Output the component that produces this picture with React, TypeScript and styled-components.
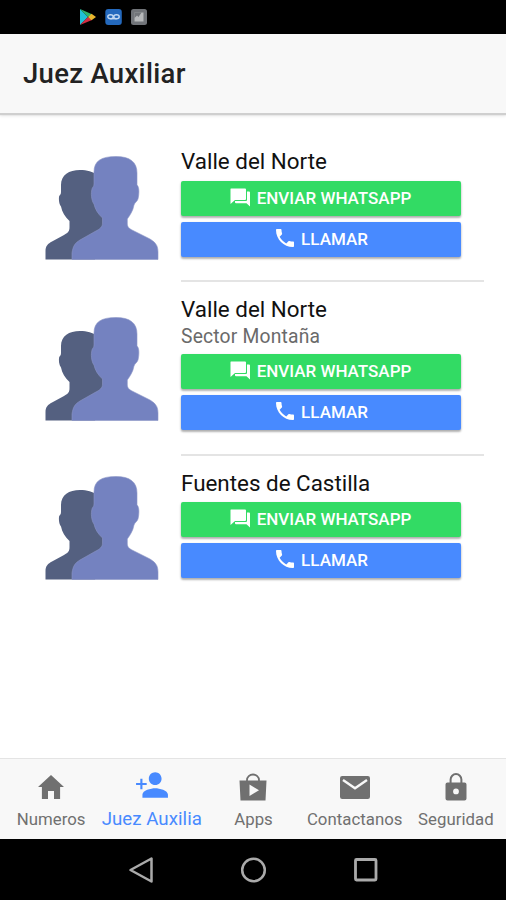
import React from "react";
import styled, { createGlobalStyle } from "styled-components";
import { IoMdCall, IoMdHome, IoMdPersonAdd } from "react-icons/io";

const GlobalStyle = createGlobalStyle`
  * { box-sizing: border-box; }
  body { margin: 0; background: #fff; font-family: Roboto, sans-serif; }
`;

const Screen = styled.div`
  width: 506px;
  height: 900px;
  display: flex;
  flex-direction: column;
  background: #fff;
  overflow: hidden;
`;

const StatusBar = styled.div`
  height: 34px;
  flex: none;
  background: #000;
  display: flex;
  align-items: center;
  gap: 8px;
  padding-left: 79px;
  svg { display: block; }
`;

const Header = styled.header`
  height: 79px;
  flex: none;
  background: #f8f8f8;
  display: flex;
  align-items: center;
  padding: 0 24px 0 23px;
  box-shadow: 0 2px 1px #cfcfcf, 0 3px 3px rgba(0, 0, 0, 0.1);
`;

const Title = styled.h1`
  margin: 0;
  font-size: 27.5px;
  font-weight: 500;
  line-height: 34px;
  letter-spacing: 0.3px;
  color: #222;
`;

const List = styled.main`
  flex: 1;
  padding-top: 21px;
`;

const Row = styled.section`
  display: flex;
  align-items: center;
  padding-left: 45px;
`;

const AvatarBox = styled.div<{ $last?: boolean }>`
  width: 136px;
  flex: none;
  margin-bottom: ${(p) => (p.$last ? 2 : 0)}px;
  svg { display: block; }
`;

const Details = styled.div<{ $last?: boolean }>`
  width: 303px;
  padding: 14px 23px 23.2px 0;
  border-bottom: 2px solid ${(p) => (p.$last ? "transparent" : "#e4e4e4")};
`;

const Name = styled.h2`
  margin: 0;
  font-size: 22.4px;
  font-weight: 400;
  line-height: 26px;
  height: 32.6px;
  color: #111;
  white-space: nowrap;
`;

const Sector = styled.p`
  margin: -4px 0 4px;
  font-size: 19.3px;
  line-height: 26px;
  letter-spacing: 0.18px;
  color: #6a6a6a;
`;

const Action = styled.button<{ $color: string; $gap: number }>`
  width: 280px;
  height: 35px;
  margin: 0 0 6px;
  padding: 0 1px 1px 0;
  border: 0;
  border-radius: 2px;
  background: ${(p) => p.$color};
  color: #fff;
  display: flex;
  align-items: center;
  justify-content: center;
  gap: ${(p) => p.$gap}px;
  font: 500 17px/20px Roboto, sans-serif;
  box-shadow: 0 2px 2px rgba(0, 0, 0, 0.24), 0 1px 3px rgba(0, 0, 0, 0.14);
  svg { display: block; flex: none; margin-bottom: 2px; }
  &:last-child { margin-bottom: 0; }
`;

const Tabs = styled.nav`
  height: 80px;
  flex: none;
  display: grid;
  grid-template-columns: repeat(5, 1fr);
  margin-bottom: 1px;
  background: #f8f8f8;
  border-top: 1px solid #e4e4e4;
  box-shadow: 0 1px 0 #f8f8f8;
`;

const Tab = styled.a<{ $active?: boolean }>`
  display: flex;
  flex-direction: column;
  align-items: center;
  padding: ${(p) => (p.$active ? 9 : 12)}px 0 0 ${(p) => (p.$active ? 0 : 1)}px;
  color: ${(p) => (p.$active ? "#488aff" : "#707070")};
  svg { display: block; flex: none; }
`;

const TabLabel = styled.span<{ $active?: boolean }>`
  margin-top: ${(p) => (p.$active ? 6 : 5)}px;
  font-size: ${(p) => (p.$active ? 18.7 : 16.8)}px;
  line-height: 22px;
  letter-spacing: 0.03px;
  white-space: nowrap;
`;

const SystemBar = styled.div`
  height: 61px;
  flex: none;
  background: #000;
  display: flex;
  justify-content: center;
  align-items: center;
  gap: 84px;
  padding-left: 1px;
  svg { display: block; }
`;

const People = () => (
  <svg width="114" height="104" viewBox="0 0 114 104">
    <path
      fill="#546080"
      d="M.5 103.500V95C.5 90 3 87.500 7 85.500L19 79C23.500 76.500 24.500 75 24.500 71V65C20 61 17 56 16 50.500C14 48 13.500 43 14.200 40C15 39 16 38.500 16 36V29C16 19 24 14 35 14C42 14 48 15.500 52 19L62 64L50 103.500Z"
    />
    <path
      fill="#7482c0"
      stroke="#8b96c6"
      strokeWidth=".6"
      d="M27 103.500V97C28 90 30 87 35 84L50 75.500C55 73 57.500 71 57.500 67V62C53 58 50 53 49 48C46.500 45 45.500 37 47.300 32C48 31 49 30 49 28V16C49 5 56 .5 71 .5C85 .5 92 6 92 17V29C94.500 31 94.200 38 93 43C92 46 90 46 89 49C88 55 85 59 82.300 63V68C82.500 71 84 72.500 88 74.500L103 82C110 85.500 113 89 113 96V103.500Z"
    />
  </svg>
);

const PlayStore = () => (
  <svg width="18" height="18" viewBox="0 0 18 18">
    <path fill="#20bfd5" d="M1 1v16l8-8z" />
    <path fill="#31b36b" d="M1 1l12 5.300L9 9z" />
    <path fill="#d62d43" d="M1 17l8-8 4 3z" />
    <path fill="#e9b62d" d="M12.500 5.800L17 9l-4.500 3.200L9 9z" />
  </svg>
);

const Voicemail = () => (
  <svg width="18" height="18" viewBox="0 0 18 18">
    <rect x=".3" y="1" width="16.500" height="16" rx="3" fill="#2469bd" />
    <g fill="none" stroke="#c3d9f2" strokeWidth="1.400">
      <ellipse cx="5.500" cy="8.700" rx="2.700" ry="2" />
      <ellipse cx="11.500" cy="8.700" rx="2.700" ry="2" />
      <path d="M5.500 10.700h6" />
    </g>
  </svg>
);

const Picture = () => (
  <svg width="17" height="18" viewBox="0 0 17 18">
    <rect x="0" y="1" width="16" height="16" rx="2.500" fill="#717479" />
    <path fill="#b7b9bb" d="M3.500 4.500H12.500v9h-9z" />
    <path fill="#717479" d="M3.500 4.500h7l-3 4.500-1.500-1.500-2.500 2.500z" />
  </svg>
);

const Chat = () => (
  <svg width="20" height="20" viewBox="0 0 20 20">
    <path fill="currentColor" d="M1 1.500H15a1 1 0 0 1 1 1V12a1 1 0 0 1-1 1H5L.5 17V2a.5 .5 0 0 1 .5-.5z" />
    <path fill="currentColor" d="M17 4.500H19a1 1 0 0 1 1 1v14l-3.500-3.300H6a1 1 0 0 1-1-1V14H16a1 1 0 0 0 1-1z" />
  </svg>
);

const PlayBag = () => (
  <svg width="32" height="32" viewBox="0 0 32 32">
    <path fill="currentColor" fillRule="evenodd" d="M2.500 9.500h27l-1 20H3.500zM12.500 13.500v11.500l9.500-5.700z" />
    <path fill="none" stroke="currentColor" strokeWidth="1.800" d="M10 10V9a6 5.500 0 0 1 12 0V10" />
  </svg>
);

const Mail = () => (
  <svg width="32" height="32" viewBox="0 0 32 32">
    <rect x="1" y="5" width="30" height="23" rx="2.200" fill="currentColor" />
    <path fill="none" stroke="#f8f8f8" strokeWidth="2.400" d="M4 9L16 17.300 28 9" />
  </svg>
);

const Lock = () => (
  <svg width="32" height="32" viewBox="0 0 32 32">
    <path
      fill="currentColor"
      fillRule="evenodd"
      d="M7.500 11.500h17a2 2 0 0 1 2 2V27.500a2 2 0 0 1-2 2h-17a2 2 0 0 1-2-2V13.500a2 2 0 0 1 2-2zM16 17.500a2.900 2.900 0 1 0 0 5.800a2.900 2.900 0 0 0 0-5.800z"
    />
    <path fill="none" stroke="currentColor" strokeWidth="2" d="M10.600 12V8.500a5.400 5.400 0 0 1 10.800 0V12" />
  </svg>
);

const contacts = [
  { name: "Valle del Norte" },
  { name: "Valle del Norte", sector: "Sector Montaña" },
  { name: "Fuentes de Castilla" },
];

const tabs = [
  { label: "Numeros", icon: <IoMdHome size={32} /> },
  { label: "Juez Auxilia", icon: <IoMdPersonAdd size={34} />, active: true },
  { label: "Apps", icon: <PlayBag /> },
  { label: "Contactanos", icon: <Mail /> },
  { label: "Seguridad", icon: <Lock /> },
];

export default function App() {
  return (
    <Screen>
      <GlobalStyle />
      <StatusBar>
        <PlayStore />
        <Voicemail />
        <Picture />
      </StatusBar>
      <Header>
        <Title>Juez Auxiliar</Title>
      </Header>
      <List>
        {contacts.map((c, i) => {
          const last = i === contacts.length - 1;
          return (
            <Row key={i}>
              <AvatarBox $last={last}>
                <People />
              </AvatarBox>
              <Details $last={last}>
                <Name>{c.name}</Name>
                {c.sector && <Sector>{c.sector}</Sector>}
                <Action $color="#32db64" $gap={7}>
                  <Chat />
                  ENVIAR WHATSAPP
                </Action>
                <Action $color="#488aff" $gap={4}>
                  <IoMdCall size={24} />
                  LLAMAR
                </Action>
              </Details>
            </Row>
          );
        })}
      </List>
      <Tabs>
        {tabs.map((t) => (
          <Tab key={t.label} $active={t.active}>
            {t.icon}
            <TabLabel $active={t.active}>{t.label}</TabLabel>
          </Tab>
        ))}
      </Tabs>
      <SystemBar>
        <svg width="28" height="28" viewBox="0 0 28 28">
          <path d="M2.500 14L23.500 2.500v23z" fill="none" stroke="#aaa" strokeWidth="2.500" strokeLinejoin="round" />
        </svg>
        <svg width="28" height="28" viewBox="0 0 28 28">
          <circle cx="13.500" cy="14" r="11.300" fill="none" stroke="#aaa" strokeWidth="2.500" />
        </svg>
        <svg width="28" height="28" viewBox="0 0 28 28">
          <rect x="3.500" y="3.500" width="20.500" height="20.500" rx="1" fill="none" stroke="#aaa" strokeWidth="2.800" />
        </svg>
      </SystemBar>
    </Screen>
  );
}
